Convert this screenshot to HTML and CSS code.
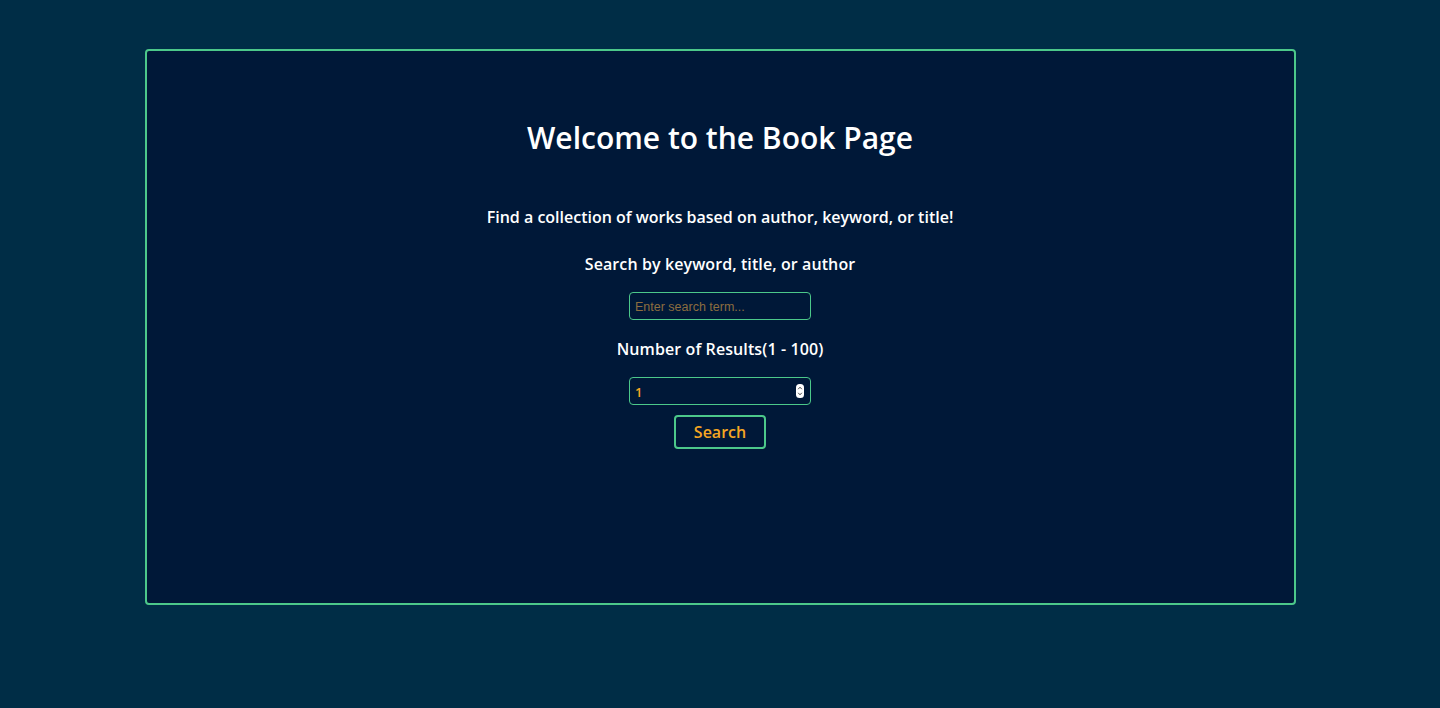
FILE: index.html
```html
<!DOCTYPE html>
<html>
<head>
<meta charset="utf-8">
<title>Book Page</title>
<link rel="stylesheet" href="styles.css">
</head>
<body>
<main class="card">
  <h1 class="title">Welcome to the Book Page</h1>
  <p class="intro">Find a collection of works based on author, keyword, or title!</p>
  <form class="search-form">
    <label class="label" for="term">Search by keyword, title, or author</label>
    <input class="field field-text" id="term" type="text" placeholder="Enter search term...">
    <label class="label label-num" for="num">Number of Results(1 - 100)</label>
    <span class="num-wrap">
      <input class="field field-num" id="num" type="number" value="1" min="1" max="100">
      <svg class="spinner" width="8" height="14" viewBox="0 0 8 14">
        <rect x="0" y="0" width="8" height="14" rx="3.5" fill="#ffffff"/>
        <path d="M2.2 5.2 L4 3.2 L5.8 5.2" fill="none" stroke="#333" stroke-width="0.9"/>
        <path d="M2.2 8.8 L4 10.8 L5.8 8.8" fill="none" stroke="#333" stroke-width="0.9"/>
      </svg>
    </span>
    <button class="btn" type="button">Search</button>
  </form>
</main>
</body>
</html>
```
FILE: styles.css
```css
html, body {
  margin: 0;
  padding: 0;
}
body {
  background: #002d46;
  font-family: "Trebuchet MS", "Open Sans", "DejaVu Sans", sans-serif;
  color: #ffffff;
  height: 708px;
  overflow: hidden;
}
.card {
  box-sizing: border-box;
  width: 1151px;
  height: 556px;
  margin: 49px auto 0;
  background: #001838;
  border: 2px solid #4cc88a;
  border-radius: 4px;
  display: flex;
  flex-direction: column;
  align-items: center;
  padding-top: 67px;
}
.title {
  margin: 0;
  font-size: 30px;
  font-weight: 600;
  line-height: 40px;
}
.intro {
  margin: 49px 0 0;
  font-size: 16px;
  font-weight: 600;
  line-height: 20px;
}
.search-form {
  display: flex;
  flex-direction: column;
  align-items: center;
  margin-top: 27px;
}
.label {
  font-size: 16px;
  font-weight: 600;
  line-height: 20px;
  letter-spacing: 0.1px;
}
.label-num {
  margin-top: 19px;
}
.field {
  box-sizing: border-box;
  width: 182px;
  height: 28px;
  margin-top: 8px;
  background: #001838;
  border: 1px solid #4cc88a;
  border-radius: 4px;
  padding: 1px 5px 0;
  font-family: "Liberation Sans", Arial, sans-serif;
  font-size: 12.5px;
  color: #f5a623;
  outline: none;
}
.field-text {
  margin-top: 18px;
}
.field::placeholder {
  color: #8c6d3f;
}
.num-wrap {
  position: relative;
  display: block;
  margin-top: 18px;
}
.field-num {
  margin-top: 0;
  display: block;
  font-family: "Open Sans", sans-serif;
  font-weight: 600;
  font-size: 13px;
  -moz-appearance: textfield;
}
.field-num::-webkit-inner-spin-button,
.field-num::-webkit-outer-spin-button {
  -webkit-appearance: none;
  margin: 0;
}
.spinner {
  position: absolute;
  right: 7px;
  top: 7px;
}
.btn {
  box-sizing: border-box;
  width: 92px;
  height: 34px;
  margin-top: 10px;
  background: #001838;
  border: 2px solid #4cc88a;
  border-radius: 4px;
  color: #f5a623;
  font-family: "Trebuchet MS", "Open Sans", "DejaVu Sans", sans-serif;
  font-size: 16px;
  font-weight: 600;
  cursor: pointer;
  padding: 0;
}
```
